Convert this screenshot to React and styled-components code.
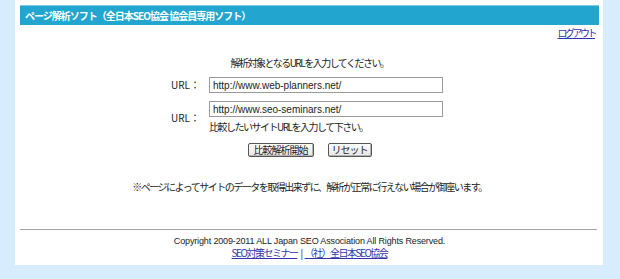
import styled, { createGlobalStyle } from "styled-components";

const GlobalStyle = createGlobalStyle`
  body {
    margin: 0;
    background-color: #d7edfd;
    font-family: "Noto Sans CJK JP", "Liberation Sans", sans-serif;
    font-size: 10px;
    letter-spacing: -1.5px;
    color: #222;
  }
`;

const Panel = styled.div`
  width: 588px;
  margin-left: 15px;
  background-color: #fff;
  padding: 5px 4px 6px 5px;
  box-sizing: border-box;
`;

const TitleBar = styled.div`
  height: 20px;
  background-color: #22a6cf;
  border-top: 1px solid #7fcde6;
  box-sizing: border-box;
  color: #fff;
  font-weight: bold;
  font-size: 10px;
  letter-spacing: -1px;
  line-height: 19px;
  padding-left: 5px;
`;

const TopLinks = styled.div`
  text-align: right;
  line-height: 14px;
  padding: 1px 4px 0 0;
`;

const Link = styled.a`
  color: #3333aa;
  text-decoration: underline;
  letter-spacing: ${(p) => (p.$tight ? "-2.5px" : "inherit")};
`;

const Intro = styled.p`
  margin: 16px 0 0;
  text-align: center;
  line-height: 14px;
`;

const FormGrid = styled.div`
  display: grid;
  grid-template-columns: auto auto;
  justify-content: center;
  column-gap: 9px;
  row-gap: 8px;
  margin-top: 7px;
  margin-right: 5px;
`;

const Label = styled.div`
  align-self: center;
  line-height: 14px;
  letter-spacing: 0;
`;

const Field = styled.div`
  display: flex;
  flex-direction: column;
`;

const Input = styled.input`
  width: 234px;
  height: 16px;
  box-sizing: border-box;
  border: 1px solid #9a9a9a;
  padding: 0 3px;
  margin: 0;
  font-family: "Liberation Sans", sans-serif;
  font-size: 10px;
  letter-spacing: 0;
  color: #222;
`;

const Hint = styled.div`
  margin-top: 3px;
  line-height: 14px;
`;

const Buttons = styled.div`
  display: flex;
  justify-content: center;
  gap: 14px;
  margin-top: 9px;
`;

const Button = styled.button`
  height: 14px;
  width: ${(p) => p.$w}px;
  padding: 0;
  border: 1px solid #555;
  border-radius: 2px;
  background: linear-gradient(#fdfdfd, #e6e6e6);
  box-shadow: inset -1px -1px 0 #b5b5b5;
  font-family: "Noto Sans CJK JP", sans-serif;
  font-size: 10px;
  letter-spacing: -1px;
  line-height: 12px;
  white-space: nowrap;
  color: #222;
`;

const Note = styled.p`
  margin: 23px 0 0;
  text-align: center;
  line-height: 14px;
`;

const Rule = styled.hr`
  margin: 35px 2px 0 0;
  border: none;
  border-top: 1px solid #a3a3a3;
`;

const Footer = styled.div`
  text-align: center;
  line-height: 12px;
  margin-top: 5px;
`;

const Copyright = styled.div`
  font-family: "Liberation Sans", sans-serif;
  font-size: 9px;
  letter-spacing: -0.15px;
`;

const Sep = styled.span`
  margin: 0 3px;
`;

export default function App() {
  return (
    <>
      <GlobalStyle />
      <Panel>
        <TitleBar>ページ解析ソフト（全日本SEO協会 協会員専用ソフト）</TitleBar>
        <TopLinks>
          <Link href="#" $tight>ログアウト</Link>
        </TopLinks>
        <Intro>解析対象となるURLを入力してください。</Intro>
        <FormGrid>
          <Label>URL：</Label>
          <Field>
            <Input defaultValue="http://www.web-planners.net/" />
          </Field>
          <Label>URL：</Label>
          <Field>
            <Input defaultValue="http://www.seo-seminars.net/" />
            <Hint>比較したいサイトURLを入力して下さい。</Hint>
          </Field>
        </FormGrid>
        <Buttons>
          <Button $w={66}>比較解析開始</Button>
          <Button $w={44}>リセット</Button>
        </Buttons>
        <Note>※ページによってサイトのデータを取得出来ずに、解析が正常に行えない場合が御座います。</Note>
        <Rule />
        <Footer>
          <Copyright>Copyright 2009-2011 ALL Japan SEO Association All Rights Reserved.</Copyright>
          <div>
            <Link href="#">SEO対策セミナー</Link>
            <Sep>|</Sep>
            <Link href="#">（社）全日本SEO協会</Link>
          </div>
        </Footer>
      </Panel>
    </>
  );
}
